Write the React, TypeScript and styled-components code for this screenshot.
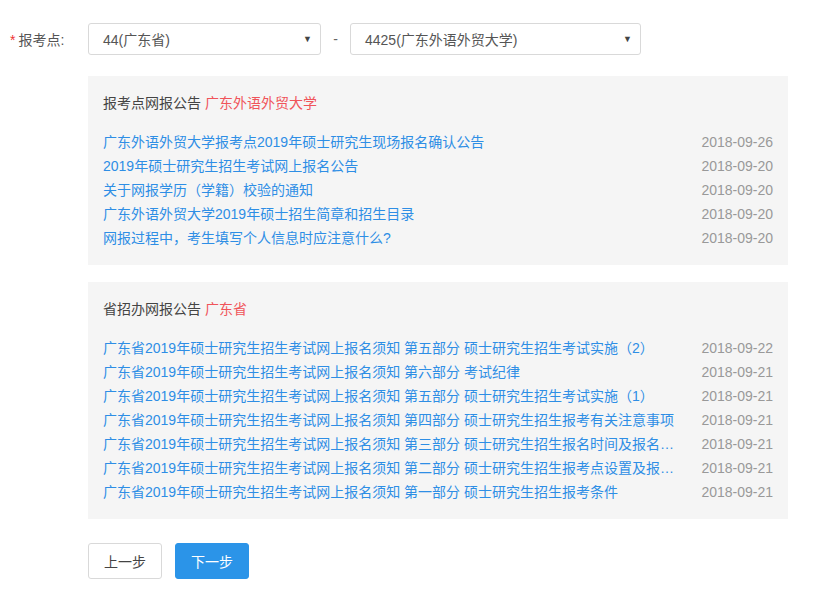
import styled, { createGlobalStyle } from "styled-components";

const Global = createGlobalStyle`
  body { margin: 0; font-family: "Microsoft YaHei", "Liberation Sans", "Noto Sans CJK SC", sans-serif; font-size: 14px; color: #333; background: #fff; }
`;

const Page = styled.div`
  padding: 23px 34px 0 10px;
  width: 778px;
`;

const FormRow = styled.div`
  display: flex;
  align-items: center;
  height: 32px;
`;

const Label = styled.div`
  width: 78px;
  color: #555;
  span { color: #e33; margin-right: 3px; }
`;

const Select = styled.div<{ $w: number }>`
  width: ${(p) => p.$w}px;
  height: 32px;
  box-sizing: border-box;
  border: 1px solid #d9d9d9;
  border-radius: 3px;
  display: flex;
  align-items: center;
  justify-content: space-between;
  padding: 0 8px 0 14px;
  color: #555;
  &::after { content: "▼"; font-size: 9px; color: #444; }
`;

const Dash = styled.div`
  width: 29px;
  text-align: center;
  color: #666;
`;

const Panel = styled.div<{ $top: number }>`
  margin: ${(p) => p.$top}px 0 0 78px;
  background: #f5f5f5;
  padding: 17px 15px 15px 15px;
`;

const Title = styled.div`
  line-height: 20px;
  color: #444;
  margin-bottom: 17px;
  span { color: #f0545a; }
`;

const Item = styled.div`
  display: flex;
  justify-content: space-between;
  line-height: 24px;
`;

const Link = styled.a`
  color: #2e8ee5;
  white-space: nowrap;
  overflow: hidden;
  text-overflow: ellipsis;
  max-width: 575px;
  min-width: 0;
`;

const Date = styled.span`
  color: #999;
  flex-shrink: 0;
  margin-left: 20px;
`;

const Buttons = styled.div`
  display: flex;
  gap: 13px;
  margin: 24px 0 0 78px;
`;

const Button = styled.button<{ $primary?: boolean }>`
  width: 74px;
  height: 36px;
  border-radius: 3px;
  font-family: inherit;
  font-size: 14px;
  border: 1px solid ${(p) => (p.$primary ? "#2b94e8" : "#d9d9d9")};
  background: ${(p) => (p.$primary ? "#2b94e8" : "#fff")};
  color: ${(p) => (p.$primary ? "#fff" : "#444")};
`;

const school = [
  ["广东外语外贸大学报考点2019年硕士研究生现场报名确认公告", "2018-09-26"],
  ["2019年硕士研究生招生考试网上报名公告", "2018-09-20"],
  ["关于网报学历（学籍）校验的通知", "2018-09-20"],
  ["广东外语外贸大学2019年硕士招生简章和招生目录", "2018-09-20"],
  ["网报过程中，考生填写个人信息时应注意什么?", "2018-09-20"],
];

const p = "广东省2019年硕士研究生招生考试网上报名须知 ";
const prov = [
  [p + "第五部分 硕士研究生招生考试实施（2）", "2018-09-22"],
  [p + "第六部分 考试纪律", "2018-09-21"],
  [p + "第五部分 硕士研究生招生考试实施（1）", "2018-09-21"],
  [p + "第四部分 硕士研究生招生报考有关注意事项", "2018-09-21"],
  [p + "第三部分 硕士研究生招生报名时间及报名地点安排", "2018-09-21"],
  [p + "第二部分 硕士研究生招生报考点设置及报考点选择", "2018-09-21"],
  [p + "第一部分 硕士研究生招生报考条件", "2018-09-21"],
];

const List = ({ items }: { items: string[][] }) => (
  <>
    {items.map(([t, d]) => (
      <Item key={t}>
        <Link>{t}</Link>
        <Date>{d}</Date>
      </Item>
    ))}
  </>
);

export default function App() {
  return (
    <Page>
      <Global />
      <FormRow>
        <Label>
          <span>*</span>报考点:
        </Label>
        <Select $w={233}>44(广东省)</Select>
        <Dash>-</Dash>
        <Select $w={291}>4425(广东外语外贸大学)</Select>
      </FormRow>
      <Panel $top={21}>
        <Title>
          报考点网报公告 <span>广东外语外贸大学</span>
        </Title>
        <List items={school} />
      </Panel>
      <Panel $top={17}>
        <Title>
          省招办网报公告 <span>广东省</span>
        </Title>
        <List items={prov} />
      </Panel>
      <Buttons>
        <Button>上一步</Button>
        <Button $primary>下一步</Button>
      </Buttons>
    </Page>
  );
}
